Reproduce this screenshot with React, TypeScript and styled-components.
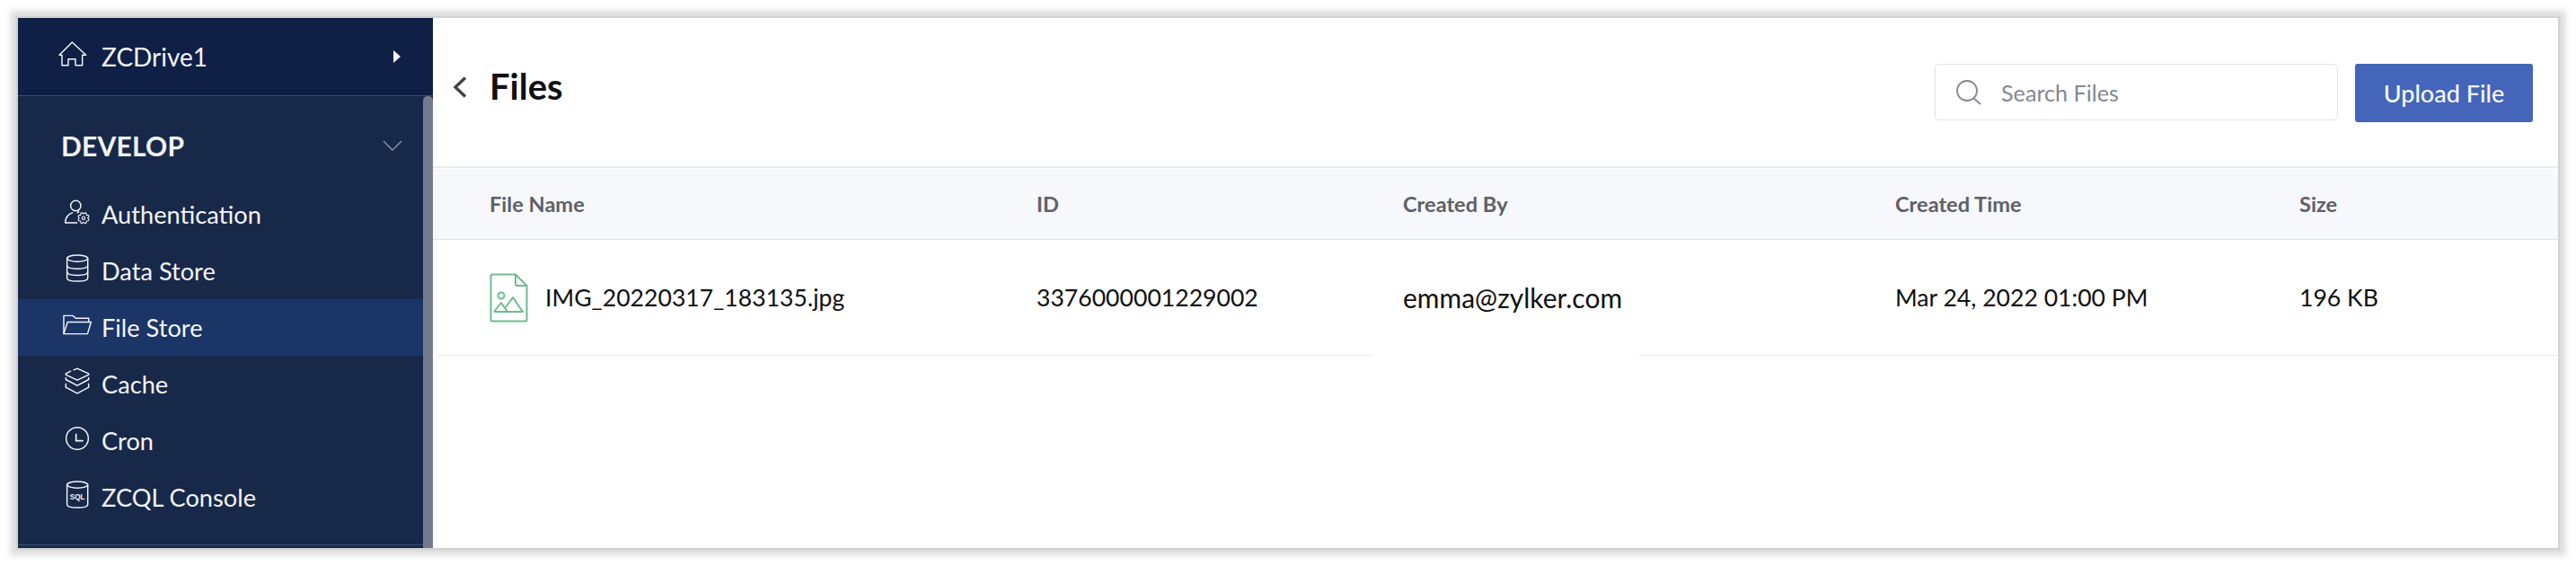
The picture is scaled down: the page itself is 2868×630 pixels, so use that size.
import React from "react";
import styled, { createGlobalStyle } from "styled-components";

const Global = createGlobalStyle`
  html, body { margin: 0; padding: 0; background: #fff; }
  body { font-family: Lato, "Open Sans", sans-serif; }
  * { box-sizing: border-box; }
`;

const Page = styled.div`
  width: 2868px;
  height: 630px;
  padding: 20px;
  overflow: hidden;
`;

const Window = styled.div`
  display: flex;
  width: 2828px;
  height: 590px;
  background: #fff;
  box-shadow: 0 0 0 2px #d2d2d2, 0 0 5px 6px #dcdcdc, 0 0 6px 10px #efefef;
`;

const Sidebar = styled.aside`
  display: flex;
  flex-direction: column;
  width: 462px;
  flex: none;
  background: #182849;
  color: #f3f5f9;
`;

const DriveBar = styled.div`
  display: flex;
  align-items: center;
  height: 87px;
  flex: none;
  padding: 0 36px 0 45px;
  background: #0f1f45;
  border-bottom: 1px solid #3d4d70;
`;

const DriveIcon = styled.span`
  display: flex;
  flex: none;
  margin-top: -6px;
`;

const DriveName = styled.span`
  flex: 1;
  margin-left: 16px;
  font-size: 28px;
  line-height: 34px;
`;

const SideBody = styled.div`
  display: flex;
  flex: 1;
  min-height: 0;
`;

const Nav = styled.nav`
  flex: 1;
  min-width: 0;
  padding-top: 22px;
  border-bottom: 1px solid #3d4d70;
  margin-bottom: 3px;
`;

const Scrollbar = styled.div`
  width: 11px;
  flex: none;
  background: #757b8e;
  border-radius: 5px 5px 0 0;
`;

const SectionHead = styled.div`
  display: flex;
  align-items: center;
  justify-content: space-between;
  height: 66px;
  margin-bottom: 12px;
  padding: 0 23px 0 48px;
  font-size: 30px;
  font-weight: 700;
  letter-spacing: 0.2px;
`;

const NavRow = styled.div<{ $active?: boolean }>`
  display: flex;
  align-items: center;
  height: 63px;
  padding-left: 50px;
  background: ${(p) => (p.$active ? "#1b3566" : "transparent")};
  font-size: 27.2px;
`;

const NavIcon = styled.span`
  display: flex;
  align-items: center;
  justify-content: center;
  width: 32px;
  height: 63px;
  padding-bottom: 6px;
  margin-right: 11px;
  flex: none;
  svg { display: block; }
`;

const Main = styled.main`
  display: flex;
  flex-direction: column;
  flex: 1;
  min-width: 0;
`;

const TitleBar = styled.header`
  display: flex;
  align-items: flex-start;
  height: 167px;
  flex: none;
  padding: 51px 28px 0 23px;
  border-bottom: 2px solid #e8e9ec;
  margin-bottom: 1px;
`;

const BackButton = styled.span`
  display: flex;
  align-items: center;
  height: 52px;
  width: 40px;
  flex: none;
`;

const Title = styled.h1`
  flex: 1;
  margin: 0;
  height: 52px;
  font-size: 40px;
  line-height: 50px;
  font-weight: 700;
  color: #111;
`;

const SearchBox = styled.div`
  display: flex;
  align-items: center;
  width: 449px;
  height: 63px;
  padding-left: 22px;
  border: 1px solid #e1e2e6;
  border-radius: 5px;
  background: #fff;
  flex: none;
`;

const Placeholder = styled.span`
  margin-left: 22px;
  font-size: 25.2px;
  color: #85878f;
`;

const UploadButton = styled.div`
  display: flex;
  align-items: center;
  justify-content: center;
  width: 198px;
  height: 65px;
  margin-left: 19px;
  border-radius: 3px;
  background: #4465ba;
  color: #f7f8fc;
  font-size: 27px;
  font-weight: 500;
  flex: none;
`;

const cols = "609px 408px 548px 450px 1fr";

const HeadRow = styled.div`
  display: grid;
  grid-template-columns: ${cols};
  align-items: center;
  height: 79px;
  flex: none;
  padding-left: 63px;
  background: #f6f8fb;
  border-bottom: 1px solid #dfe1e7;
  color: #5f6068;
  font-size: 23.6px;
  font-weight: 700;
`;

const DataRow = styled.div`
  display: grid;
  grid-template-columns: ${cols};
  align-items: center;
  height: 129px;
  margin-left: 5px;
  padding-left: 58px;
  border-bottom: 1px solid #e9eaee;
  color: #111;
  font-size: 26.6px;
`;

const NameCell = styled.div`
  display: flex;
  align-items: center;
  gap: 19px;
`;

const CoveredCell = styled.div`
  position: relative;
  font-size: 30px;
  &::after {
    content: "";
    position: absolute;
    left: -34px;
    top: calc(50% + 63px);
    width: 296px;
    height: 3px;
    background: #fff;
  }
`;

const Ico = ({ w, h, vb, children }: { w: number; h: number; vb: string; children: React.ReactNode }) => (
  <svg width={w} height={h} viewBox={vb} fill="none" stroke="#f3f5f9" strokeWidth={4.4} strokeLinecap="round" strokeLinejoin="round">
    {children}
  </svg>
);

const gearPath = (() => {
  const pts: string[] = [];
  for (let i = 0; i < 24; i++) {
    const a = (i / 24) * Math.PI * 2;
    const r = i % 3 === 0 ? 14 : 18.5;
    pts.push(`${(66 + r * Math.cos(a)).toFixed(1)} ${(62 + r * Math.sin(a)).toFixed(1)}`);
  }
  return "M" + pts.join(" L") + " Z";
})();

const AuthIcon = () => (
  <Ico w={30} h={28} vb="0 0 90 84">
    <circle cx="40" cy="21" r="17" />
    <path d="M5 78 C5 62 14 50 29 44 M5 78 H44 M50 40 C49 42 47 43 46 44" />
    <path d={gearPath} strokeWidth={3.4} />
    <circle cx="66" cy="62" r="5" strokeWidth={3.4} />
  </Ico>
);

const DbIcon = () => (
  <Ico w={27} h={31} vb="0 0 80 94">
    <ellipse cx="39" cy="14" rx="35" ry="11" />
    <path d="M4 14 V80 C4 87 20 91 39 91 C58 91 74 87 74 80 V14" />
    <path d="M4 38 C4 45 20 49 39 49 C58 49 74 45 74 38" />
    <path d="M4 60 C4 67 20 71 39 71 C58 71 74 67 74 60" />
  </Ico>
);

const FolderIcon = () => (
  <Ico w={33} h={23} vb="0 0 98 68">
    <path d="M3 65 V3 H34 L44 12 H88 V25" strokeLinecap="butt" strokeLinejoin="miter" />
    <path d="M3 65 L16 25 H96 L84 65 Z" strokeLinejoin="miter" />
  </Ico>
);

const CacheIcon = () => (
  <Ico w={28} h={31} vb="0 0 84 92">
    <path d="M30 8 L42 3 L80 20 L80 24 L42 42 L4 24 L4 20 L20 12" />
    <path d="M4 34 L4 40 L42 60 L80 40 L80 34" />
    <path d="M4 54 L4 66 L42 86 L80 66 L80 54" />
  </Ico>
);

const ClockIcon = () => (
  <Ico w={28} h={28} vb="0 0 84 84">
    <circle cx="42" cy="42" r="37" />
    <path d="M38 28 V50 H60" strokeWidth={5} />
  </Ico>
);

const SqlIcon = () => (
  <Ico w={27} h={31} vb="0 0 80 94">
    <ellipse cx="39" cy="14" rx="35" ry="11" />
    <path d="M4 14 V80 C4 87 20 91 39 91 C58 91 74 87 74 80 V14" />
    <text x="39" y="63" textAnchor="middle" fontFamily="Liberation Sans, sans-serif" fontSize="25" fontWeight="700" fill="#f3f5f9" stroke="none">SQL</text>
  </Ico>
);

const items = [
  { label: "Authentication", icon: <AuthIcon /> },
  { label: "Data Store", icon: <DbIcon /> },
  { label: "File Store", icon: <FolderIcon />, active: true },
  { label: "Cache", icon: <CacheIcon /> },
  { label: "Cron", icon: <ClockIcon /> },
  { label: "ZCQL Console", icon: <SqlIcon /> },
];

export default function App() {
  return (
    <Page>
      <Global />
      <Window>
        <Sidebar>
          <DriveBar>
            <DriveIcon>
              <Ico w={32} h={28} vb="0 0 96 84">
                <path d="M3 46 L46 3 L92 46 H80 V80 H57 V59 H33 V80 H12 V46 Z" />
              </Ico>
            </DriveIcon>
            <DriveName>ZCDrive1</DriveName>
            <svg width="8" height="14" viewBox="0 0 8 14"><path d="M0 0 L8 7 L0 14 Z" fill="#fff" /></svg>
          </DriveBar>
          <SideBody>
            <Nav>
              <SectionHead>
                DEVELOP
                <svg width="22" height="12" viewBox="0 0 22 12" fill="none" stroke="#7f8aa5" strokeWidth="1.6"><path d="M1 1 L11 11 L21 1" /></svg>
              </SectionHead>
              {items.map((it) => (
                <NavRow key={it.label} $active={it.active}>
                  <NavIcon>{it.icon}</NavIcon>
                  {it.label}
                </NavRow>
              ))}
            </Nav>
            <Scrollbar />
          </SideBody>
        </Sidebar>
        <Main>
          <TitleBar>
            <BackButton>
              <svg width="14" height="24" viewBox="0 0 14 24" fill="none" stroke="#444" strokeWidth="3.4"><path d="M13 1.5 L2 12 L13 22.5" /></svg>
            </BackButton>
            <Title>Files</Title>
            <SearchBox>
              <svg width="29" height="28" viewBox="0 0 29 28" fill="none" stroke="#85878f" strokeWidth="1.8"><circle cx="13" cy="12" r="11" /><path d="M20 20 L28 27" /></svg>
              <Placeholder>Search Files</Placeholder>
            </SearchBox>
            <UploadButton>Upload File</UploadButton>
          </TitleBar>
          <HeadRow>
            <div>File Name</div>
            <div>ID</div>
            <div>Created By</div>
            <div>Created Time</div>
            <div>Size</div>
          </HeadRow>
          <DataRow>
            <NameCell>
              <svg width="43" height="55" viewBox="0 0 43 55" fill="none" stroke="#6dbb8e" strokeWidth="2" strokeLinejoin="round">
                <path d="M3 1.5 H29 L41.5 14 V52 Q41.5 53.5 40 53.5 H3 Q1.5 53.5 1.5 52 V3 Q1.5 1.5 3 1.5 Z" />
                <path d="M29 1.5 V12 Q29 14 31 14 H41.5" />
                <circle cx="13" cy="25" r="3.5" />
                <path d="M5 43 H37 L26 27 L18 38 M5 43 L13 33 L20 43" />
              </svg>
              IMG_20220317_183135.jpg
            </NameCell>
            <div>3376000001229002</div>
            <CoveredCell>emma@zylker.com</CoveredCell>
            <div>Mar 24, 2022 01:00 PM</div>
            <div>196 KB</div>
          </DataRow>
        </Main>
      </Window>
    </Page>
  );
}
